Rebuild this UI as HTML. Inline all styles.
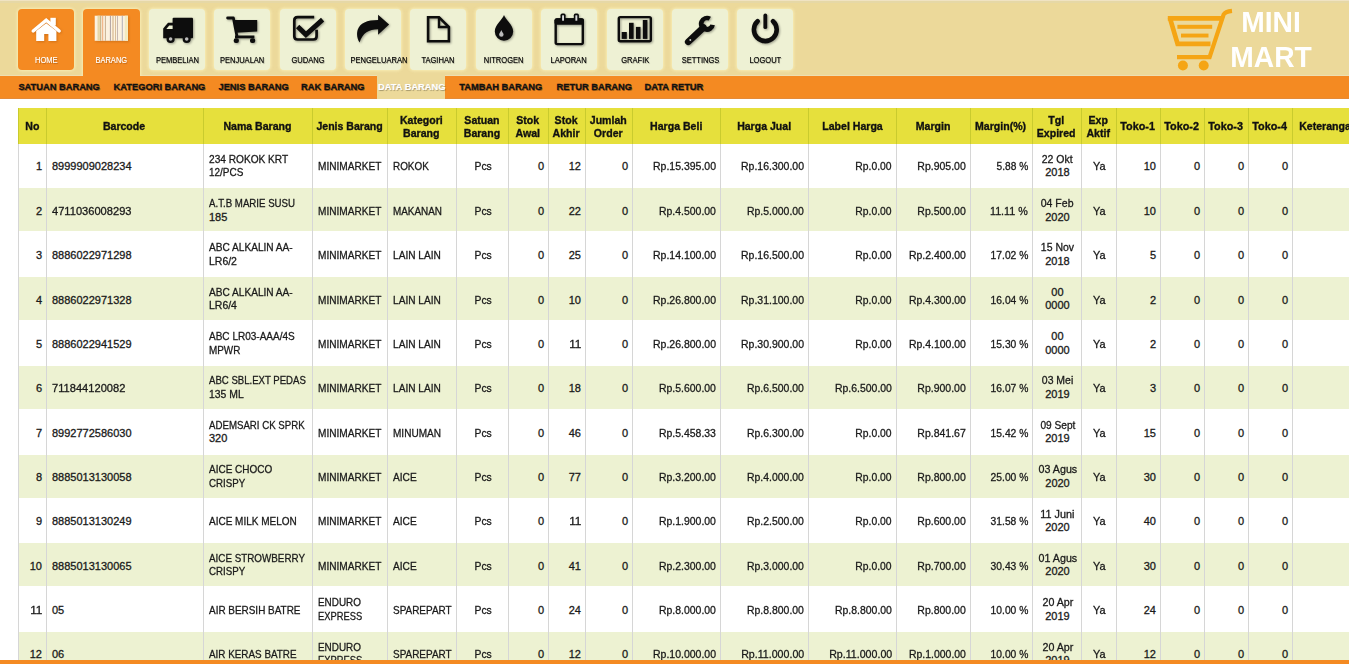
<!DOCTYPE html>
<html><head><meta charset="utf-8">
<style>
html,body{margin:0;padding:0;width:1349px;height:664px;overflow:hidden;background:#fff;font-family:"Liberation Sans",sans-serif;}
#hdr{position:absolute;left:0;top:0;width:1349px;height:76px;background:#ECD99A;}
#hdrtop{position:absolute;left:0;top:0;width:1349px;height:1px;background:#F0E3C2;}
#hdrtop2{position:absolute;left:0;top:1px;width:1349px;height:2px;background:#E6D8A6;}
.tile{position:absolute;top:9px;width:56px;height:61px;border-radius:4px;background:#EEF1D4;box-shadow:0 0 3px 1px rgba(250,240,185,0.85);}
.tile.on{background:#F48A22;}
.tile.sel{height:67px;width:57px;border-radius:4px 4px 0 0;}
.tile svg{position:absolute;left:0;top:0;}
.lbl{position:absolute;left:3px;width:50px;top:47px;text-align:center;font-size:8.2px;line-height:10px;color:#000;white-space:nowrap;-webkit-text-stroke:0.15px #000;text-shadow:0.7px 0.7px 0.7px rgba(0,0,0,0.3);}
.lbl span{display:inline-block;transform:scaleX(0.92);}
.on .lbl{color:#fff;-webkit-text-stroke:0.15px #fff;text-shadow:0.8px 0.8px 0.8px rgba(110,50,0,0.4);}
#sub{position:absolute;left:0;top:76px;width:1349px;height:23px;background:#F48A22;}
.si{position:absolute;top:80px;height:14px;line-height:14px;font-size:9.3px;font-weight:bold;color:#111;white-space:nowrap;-webkit-text-stroke:0.3px #111;text-shadow:0.8px 0.8px 0.6px rgba(0,0,0,0.3);}
#act{position:absolute;left:377px;top:76px;width:68px;height:23px;background:#ECD99A;}
.si.a{color:#fff;-webkit-text-stroke:0.2px #fff;text-shadow:0.8px 0.8px 0.8px rgba(0,0,0,0.3);}
#logo{position:absolute;left:1160px;top:5px;}
.lt{position:absolute;font-size:30px;font-weight:bold;color:#fff;width:120px;text-align:center;left:1211px;line-height:30px;transform:scaleX(0.94);}
#botbar{position:absolute;left:0;top:660px;width:1349px;height:4px;background:#F48A22;}

.th{position:absolute;top:108px;height:36px;background:#E6E03C;display:flex;align-items:center;justify-content:center;text-align:center;font-weight:bold;font-size:11px;line-height:13.4px;color:#111;-webkit-text-stroke:0.35px #111;box-sizing:border-box;}
.tr{position:absolute;left:18px;width:1346px;height:44.364px;background:#fff;}
.tr.even{background:#EDF2D2;height:43px;}
.td{position:absolute;height:44.364px;display:flex;white-space:nowrap;align-items:center;font-size:11px;line-height:13.5px;color:#1a1a1a;-webkit-text-stroke:0.3px #1a1a1a;box-sizing:border-box;padding:0 4px 0 6px;}
.td.r{justify-content:flex-end;text-align:right;}
.td.c{justify-content:center;text-align:center;}
.td.l{justify-content:flex-start;text-align:left;}
.in span{display:block;white-space:nowrap;}
.td .in.one{transform:translateY(0.7px)}
.th .in{transform:translateY(0.8px)}
.td.r .in{text-align:right}.td.c .in,.th .in{text-align:center}
.vl{position:absolute;top:144px;width:1px;height:516px;background:#D6D6D6;}
.hvl{position:absolute;top:108px;width:1px;height:36px;background:#C9CB2E;}
</style></head><body>
<div id="hdr"></div><div style="position:absolute;left:0;top:75px;width:377px;height:1px;background:#EDDFB2"></div><div style="position:absolute;left:445px;top:75px;width:904px;height:1px;background:#EDDFB2"></div><div id="hdrtop"></div><div id="hdrtop2"></div>
<div class="tile on" style="left:18px"><svg width="56" height="45" viewBox="0 0 56 45" style="filter:drop-shadow(1px 1px 1px rgba(150,70,0,0.35));"><polyline points="15.2,22 28.2,11.2 41.2,22" fill="none" stroke="#fff" stroke-width="3.4" stroke-linecap="round" stroke-linejoin="miter"/>
<path d="M18.2,22 L28.2,14.2 L38.4,22 V32 H30.4 V25 H26.2 V32 H18.2 Z" fill="#fff"/>
<rect x="32.4" y="8.8" width="5.4" height="7.6" fill="#fff"/></svg><div class="lbl"><span>HOME</span></div></div>
<div class="tile on sel" style="left:83px"><svg width="56" height="45" viewBox="0 0 56 45" style="filter:drop-shadow(1px 1px 1px rgba(150,70,0,0.35));"><rect x="11.7" y="6.7" width="33.3" height="25.1" fill="#FCF2E0"/>
<rect x="14.5" y="6.7" width="2.4" height="25.1" fill="#E6D6A8"/>
<rect x="17.2" y="6.7" width="1" height="25.1" fill="#BFA878"/>
<rect x="19.2" y="6.7" width="1" height="25.1" fill="#EFAA78"/>
<rect x="21.9" y="6.7" width="1" height="25.1" fill="#C8B090"/>
<rect x="26.9" y="6.7" width="1" height="25.1" fill="#B0A0A0"/>
<rect x="29.4" y="6.7" width="1.2" height="25.1" fill="#D8B890"/>
<rect x="32.1" y="6.7" width="0.8" height="25.1" fill="#D0B088"/>
<rect x="34.1" y="6.7" width="0.8" height="25.1" fill="#B8A8A8"/>
<rect x="38.8" y="6.7" width="1" height="25.1" fill="#B0B0B8"/>
<rect x="41.8" y="6.7" width="3" height="25.1" fill="#F3EBC0"/></svg><div class="lbl"><span>BARANG</span></div></div>
<div class="tile" style="left:149px"><svg width="56" height="45" viewBox="0 0 56 45" style="filter:drop-shadow(1px 1.5px 1px rgba(0,0,0,0.35));"><rect x="23.6" y="8.7" width="20.4" height="20.5" rx="1" fill="#0d0d0d"/>
<path d="M14.2,29.2 V19.5 L19,13.8 H24.5 V29.2 Z" fill="#0d0d0d"/>
<path d="M17.3,20 L20.2,16.6 H23.6 V20 Z" fill="#EEF1D4"/>
<circle cx="21.6" cy="30" r="4.1" fill="#0d0d0d"/><circle cx="37.7" cy="30" r="4.1" fill="#0d0d0d"/>
<circle cx="21.6" cy="30" r="1.8" fill="#bbb"/><circle cx="37.7" cy="30" r="1.8" fill="#bbb"/></svg><div class="lbl"><span>PEMBELIAN</span></div></div>
<div class="tile" style="left:214px"><svg width="56" height="45" viewBox="0 0 56 45" style="filter:drop-shadow(1px 1.5px 1px rgba(0,0,0,0.35));"><path d="M13.6,9 H19.4 L23,27.4" fill="none" stroke="#0d0d0d" stroke-width="2.8" stroke-linejoin="round" stroke-linecap="round"/>
<path d="M19.6,10.9 H43.2 V22.6 L21.9,23.8 Z" fill="#0d0d0d"/>
<rect x="21" y="26.5" width="19.4" height="2.8" fill="#0d0d0d"/>
<rect x="19.7" y="29.3" width="5.2" height="4.6" rx="2" fill="#0d0d0d"/><rect x="36" y="29.3" width="5.2" height="4.6" rx="2" fill="#0d0d0d"/></svg><div class="lbl"><span>PENJUALAN</span></div></div>
<div class="tile" style="left:280px"><svg width="56" height="45" viewBox="0 0 56 45" style="filter:drop-shadow(1px 1.5px 1px rgba(0,0,0,0.35));"><path d="M34.2,8.2 H17.6 Q14.3,8.2 14.3,11.5 V27.2 Q14.3,30.5 17.6,30.5 H33.3 Q36.6,30.5 36.6,27.2 V20.8" fill="none" stroke="#0d0d0d" stroke-width="2.7"/>
<path d="M17.6,17.6 L25.9,25.6 L42.6,10.6" fill="none" stroke="#0d0d0d" stroke-width="4.8" stroke-linejoin="miter"/></svg><div class="lbl"><span>GUDANG</span></div></div>
<div class="tile" style="left:345px"><svg width="56" height="45" viewBox="0 0 56 45" style="filter:drop-shadow(1px 1.5px 1px rgba(0,0,0,0.35));"><path d="M33.1,5.8 L44.1,15.6 L33.1,25.7 V20.3 C24,20.3 17.5,24 14.6,33.6 C11.8,29.5 11.6,24.5 12.6,21 C14.8,14 22,10.9 33.1,10.9 Z" fill="#0d0d0d"/></svg><div class="lbl"><span>PENGELUARAN</span></div></div>
<div class="tile" style="left:410px"><svg width="56" height="45" viewBox="0 0 56 45" style="filter:drop-shadow(1px 1.5px 1px rgba(0,0,0,0.35));"><path d="M18.1,8.3 H29 L38.9,18 V32.2 H18.1 Z" fill="none" stroke="#0d0d0d" stroke-width="2.6" stroke-linejoin="miter"/>
<path d="M29,8.3 V18 H38.9" fill="none" stroke="#0d0d0d" stroke-width="2.4"/></svg><div class="lbl"><span>TAGIHAN</span></div></div>
<div class="tile" style="left:476px"><svg width="56" height="45" viewBox="0 0 56 45" style="filter:drop-shadow(1px 1.5px 1px rgba(0,0,0,0.35));"><path d="M28,6 C29.5,10.5 37.2,16 37.2,22.5 A9.2,9.2 0 0 1 18.8,22.5 C18.8,16 26.5,10.5 28,6 Z" fill="#0d0d0d"/>
<path d="M25.3,21 C25.8,23 27.6,24.2 27.6,25.6 A2.2,2.2 0 0 1 23.1,25.6 C23.1,24.2 24.8,23 25.3,21 Z" fill="#bbb"/></svg><div class="lbl"><span>NITROGEN</span></div></div>
<div class="tile" style="left:541px"><svg width="56" height="45" viewBox="0 0 56 45" style="filter:drop-shadow(1px 1.5px 1px rgba(0,0,0,0.35));"><rect x="14.7" y="10.4" width="27.1" height="24.7" rx="1.5" fill="none" stroke="#0d0d0d" stroke-width="2.4"/>
<rect x="13.5" y="9.2" width="29.5" height="6.6" rx="2" fill="#0d0d0d"/>
<rect x="19.5" y="4.6" width="5.1" height="8.4" rx="1.6" fill="#0d0d0d"/><rect x="32.8" y="4.6" width="5.1" height="8.4" rx="1.6" fill="#0d0d0d"/>
<rect x="21.1" y="6.3" width="1.9" height="5.4" fill="#ddd"/><rect x="34.4" y="6.3" width="1.9" height="5.4" fill="#ddd"/></svg><div class="lbl"><span>LAPORAN</span></div></div>
<div class="tile" style="left:607px"><svg width="56" height="45" viewBox="0 0 56 45" style="filter:drop-shadow(1px 1.5px 1px rgba(0,0,0,0.35));"><rect x="11.8" y="8.1" width="32" height="24.2" rx="1.5" fill="none" stroke="#0d0d0d" stroke-width="2.4"/>
<rect x="14.7" y="23" width="5.1" height="6.9" fill="#0d0d0d"/><rect x="22" y="13.8" width="4.6" height="16.1" fill="#0d0d0d"/>
<rect x="28.9" y="17.9" width="4.6" height="12" fill="#0d0d0d"/><rect x="35.8" y="11" width="4.6" height="18.9" fill="#0d0d0d"/></svg><div class="lbl"><span>GRAFIK</span></div></div>
<div class="tile" style="left:672px"><svg width="56" height="45" viewBox="0 0 56 45" style="filter:drop-shadow(1px 1.5px 1px rgba(0,0,0,0.35));"><path d="M42.9,16.2 A8.1,8.1 0 1 1 38.95,7.8 L36.7,11.6 A3.4,3.4 0 1 0 38.3,15.4 Z" fill="#0d0d0d"/>
<path d="M31.5,18.5 L16.2,32.8" fill="none" stroke="#0d0d0d" stroke-width="6.6" stroke-linecap="round"/>
<circle cx="18.3" cy="31" r="0.95" fill="#ccc"/></svg><div class="lbl"><span>SETTINGS</span></div></div>
<div class="tile" style="left:737px"><svg width="56" height="45" viewBox="0 0 56 45" style="filter:drop-shadow(1px 1.5px 1px rgba(0,0,0,0.35));"><path d="M20.6,12.3 A11.4,11.4 0 1 0 36,12.3" fill="none" stroke="#0d0d0d" stroke-width="4.6" stroke-linecap="round"/>
<line x1="28.3" y1="6.4" x2="28.3" y2="18.2" stroke="#0d0d0d" stroke-width="3.8" stroke-linecap="round"/></svg><div class="lbl"><span>LOGOUT</span></div></div>
<div id="sub"></div>
<div id="act"></div><div style="position:absolute;left:0;top:98px;width:377px;height:1px;background:#E48A38"></div><div style="position:absolute;left:445px;top:98px;width:904px;height:1px;background:#E48A38"></div>
<div class="si" style="left:18.4px">SATUAN BARANG</div>
<div class="si" style="left:113.6px">KATEGORI BARANG</div>
<div class="si" style="left:218.5px">JENIS BARANG</div>
<div class="si" style="left:301px">RAK BARANG</div>
<div class="si a" style="left:378px">DATA BARANG</div>
<div class="si" style="left:459.3px">TAMBAH BARANG</div>
<div class="si" style="left:556.6px">RETUR BARANG</div>
<div class="si" style="left:644.6px">DATA RETUR</div>
<svg id="logo" width="80" height="70" viewBox="1160 5 80 70">
<path d="M1167.8,18.4 H1222 M1169.8,17.6 L1177.6,43.8 H1210.5" fill="none" stroke="#F5A514" stroke-width="4.7" stroke-linejoin="miter"/>
<path d="M1232,10.8 C1228,11.2 1225,12 1223.6,14.5 L1209.6,57.2 H1177" fill="none" stroke="#F5A514" stroke-width="4.2" stroke-linejoin="miter"/>
<rect x="1177.4" y="24.8" width="34.8" height="4" fill="#F5A514"/>
<rect x="1181" y="33.6" width="27.5" height="3.9" fill="#F5A514"/>
<circle cx="1182.9" cy="65.5" r="5" fill="#F5A514"/><circle cx="1203.7" cy="65.5" r="5" fill="#F5A514"/>
</svg>
<div class="lt" style="top:7px">MINI</div><div class="lt" style="top:42px">MART</div>
<div class="th" style="left:18px;width:28px"><div class="in"><span style="transform:scaleX(0.960);transform-origin:center">No</span></div></div>
<div class="th" style="left:46px;width:157px"><div class="in"><span style="transform:scaleX(0.960);transform-origin:center">Barcode</span></div></div>
<div class="th" style="left:203px;width:109px"><div class="in"><span style="transform:scaleX(0.960);transform-origin:center">Nama Barang</span></div></div>
<div class="th" style="left:312px;width:75px"><div class="in"><span style="transform:scaleX(0.960);transform-origin:center">Jenis Barang</span></div></div>
<div class="th" style="left:387px;width:69px"><div class="in"><span style="transform:scaleX(0.960);transform-origin:center">Kategori</span><span style="transform:scaleX(0.960);transform-origin:center">Barang</span></div></div>
<div class="th" style="left:456px;width:52px"><div class="in"><span style="transform:scaleX(0.960);transform-origin:center">Satuan</span><span style="transform:scaleX(0.960);transform-origin:center">Barang</span></div></div>
<div class="th" style="left:508px;width:40px"><div class="in"><span style="transform:scaleX(0.960);transform-origin:center">Stok</span><span style="transform:scaleX(0.967);transform-origin:center">Awal</span></div></div>
<div class="th" style="left:548px;width:37px"><div class="in"><span style="transform:scaleX(0.960);transform-origin:center">Stok</span><span style="transform:scaleX(0.960);transform-origin:center">Akhir</span></div></div>
<div class="th" style="left:585px;width:47px"><div class="in"><span style="transform:scaleX(0.960);transform-origin:center">Jumlah</span><span style="transform:scaleX(0.960);transform-origin:center">Order</span></div></div>
<div class="th" style="left:632px;width:88px"><div class="in"><span style="transform:scaleX(0.960);transform-origin:center">Harga Beli</span></div></div>
<div class="th" style="left:720px;width:88px"><div class="in"><span style="transform:scaleX(0.960);transform-origin:center">Harga Jual</span></div></div>
<div class="th" style="left:808px;width:88px"><div class="in"><span style="transform:scaleX(0.960);transform-origin:center">Label Harga</span></div></div>
<div class="th" style="left:896px;width:74px"><div class="in"><span style="transform:scaleX(0.960);transform-origin:center">Margin</span></div></div>
<div class="th" style="left:970px;width:62px"><div class="in"><span style="transform:scaleX(0.960);transform-origin:center">Margin(%)</span></div></div>
<div class="th" style="left:1032px;width:49px"><div class="in"><span style="transform:scaleX(0.960);transform-origin:center">Tgl</span><span style="transform:scaleX(0.960);transform-origin:center">Expired</span></div></div>
<div class="th" style="left:1081px;width:35px"><div class="in"><span style="transform:scaleX(0.960);transform-origin:center">Exp</span><span style="transform:scaleX(0.960);transform-origin:center">Aktif</span></div></div>
<div class="th" style="left:1116px;width:44px"><div class="in"><span style="transform:scaleX(0.982);transform-origin:center">Toko-1</span></div></div>
<div class="th" style="left:1160px;width:44px"><div class="in"><span style="transform:scaleX(0.982);transform-origin:center">Toko-2</span></div></div>
<div class="th" style="left:1204px;width:44px"><div class="in"><span style="transform:scaleX(0.982);transform-origin:center">Toko-3</span></div></div>
<div class="th" style="left:1248px;width:44px"><div class="in"><span style="transform:scaleX(0.982);transform-origin:center">Toko-4</span></div></div>
<div class="th" style="left:1292px;width:72px"><div class="in"><span style="transform:scaleX(0.960);transform-origin:center">Keterangan</span></div></div>
<div class="tr" style="top:144.000px"></div>
<div class="td r" style="left:18px;top:144.000px;width:28px"><div class="in one"><span style="transform:scaleX(1.000);transform-origin:right">1</span></div></div>
<div class="td l" style="left:46px;top:144.000px;width:157px"><div class="in one"><span style="transform:scaleX(1.000);transform-origin:left">8999909028234</span></div></div>
<div class="td l" style="left:203px;top:144.000px;width:109px"><div class="in"><span style="transform:scaleX(0.920);transform-origin:left">234 ROKOK KRT</span><span style="transform:scaleX(0.906);transform-origin:left">12/PCS</span></div></div>
<div class="td l" style="left:312px;top:144.000px;width:75px"><div class="in one"><span style="transform:scaleX(0.918);transform-origin:left">MINIMARKET</span></div></div>
<div class="td l" style="left:387px;top:144.000px;width:69px"><div class="in one"><span style="transform:scaleX(0.900);transform-origin:left">ROKOK</span></div></div>
<div class="td c" style="left:456px;top:144.000px;width:52px"><div class="in one"><span style="transform:scaleX(0.942);transform-origin:center">Pcs</span></div></div>
<div class="td r" style="left:508px;top:144.000px;width:40px"><div class="in one"><span style="transform:scaleX(1.000);transform-origin:right">0</span></div></div>
<div class="td r" style="left:548px;top:144.000px;width:37px"><div class="in one"><span style="transform:scaleX(1.000);transform-origin:right">12</span></div></div>
<div class="td r" style="left:585px;top:144.000px;width:47px"><div class="in one"><span style="transform:scaleX(1.000);transform-origin:right">0</span></div></div>
<div class="td r" style="left:632px;top:144.000px;width:88px"><div class="in one"><span style="transform:scaleX(0.955);transform-origin:right">Rp.15.395.00</span></div></div>
<div class="td r" style="left:720px;top:144.000px;width:88px"><div class="in one"><span style="transform:scaleX(0.955);transform-origin:right">Rp.16.300.00</span></div></div>
<div class="td r" style="left:808px;top:144.000px;width:88px"><div class="in one"><span style="transform:scaleX(0.940);transform-origin:right">Rp.0.00</span></div></div>
<div class="td r" style="left:896px;top:144.000px;width:74px"><div class="in one"><span style="transform:scaleX(0.954);transform-origin:right">Rp.905.00</span></div></div>
<div class="td r" style="left:970px;top:144.000px;width:62px"><div class="in one"><span style="transform:scaleX(0.924);transform-origin:right">5.88 %</span></div></div>
<div class="td c" style="left:1032px;top:144.000px;width:49px"><div class="in"><span style="transform:scaleX(0.952);transform-origin:center">22 Okt</span><span style="transform:scaleX(1.000);transform-origin:center">2018</span></div></div>
<div class="td c" style="left:1081px;top:144.000px;width:35px"><div class="in one"><span style="transform:scaleX(0.992);transform-origin:center">Ya</span></div></div>
<div class="td r" style="left:1116px;top:144.000px;width:44px"><div class="in one"><span style="transform:scaleX(1.000);transform-origin:right">10</span></div></div>
<div class="td r" style="left:1160px;top:144.000px;width:44px"><div class="in one"><span style="transform:scaleX(1.000);transform-origin:right">0</span></div></div>
<div class="td r" style="left:1204px;top:144.000px;width:44px"><div class="in one"><span style="transform:scaleX(1.000);transform-origin:right">0</span></div></div>
<div class="td r" style="left:1248px;top:144.000px;width:44px"><div class="in one"><span style="transform:scaleX(1.000);transform-origin:right">0</span></div></div>
<div class="td l" style="left:1292px;top:144.000px;width:72px"><div class="in one"><span style="transform:scaleX(1.000);transform-origin:left"></span></div></div>
<div class="tr even" style="top:188.364px"></div>
<div class="td r" style="left:18px;top:188.364px;width:28px"><div class="in one"><span style="transform:scaleX(1.000);transform-origin:right">2</span></div></div>
<div class="td l" style="left:46px;top:188.364px;width:157px"><div class="in one"><span style="transform:scaleX(1.010);transform-origin:left">4711036008293</span></div></div>
<div class="td l" style="left:203px;top:188.364px;width:109px"><div class="in"><span style="transform:scaleX(0.880);transform-origin:left">A.T.B MARIE SUSU</span><span style="transform:scaleX(1.000);transform-origin:left">185</span></div></div>
<div class="td l" style="left:312px;top:188.364px;width:75px"><div class="in one"><span style="transform:scaleX(0.918);transform-origin:left">MINIMARKET</span></div></div>
<div class="td l" style="left:387px;top:188.364px;width:69px"><div class="in one"><span style="transform:scaleX(0.900);transform-origin:left">MAKANAN</span></div></div>
<div class="td c" style="left:456px;top:188.364px;width:52px"><div class="in one"><span style="transform:scaleX(0.942);transform-origin:center">Pcs</span></div></div>
<div class="td r" style="left:508px;top:188.364px;width:40px"><div class="in one"><span style="transform:scaleX(1.000);transform-origin:right">0</span></div></div>
<div class="td r" style="left:548px;top:188.364px;width:37px"><div class="in one"><span style="transform:scaleX(1.000);transform-origin:right">22</span></div></div>
<div class="td r" style="left:585px;top:188.364px;width:47px"><div class="in one"><span style="transform:scaleX(1.000);transform-origin:right">0</span></div></div>
<div class="td r" style="left:632px;top:188.364px;width:88px"><div class="in one"><span style="transform:scaleX(0.950);transform-origin:right">Rp.4.500.00</span></div></div>
<div class="td r" style="left:720px;top:188.364px;width:88px"><div class="in one"><span style="transform:scaleX(0.950);transform-origin:right">Rp.5.000.00</span></div></div>
<div class="td r" style="left:808px;top:188.364px;width:88px"><div class="in one"><span style="transform:scaleX(0.940);transform-origin:right">Rp.0.00</span></div></div>
<div class="td r" style="left:896px;top:188.364px;width:74px"><div class="in one"><span style="transform:scaleX(0.954);transform-origin:right">Rp.500.00</span></div></div>
<div class="td r" style="left:970px;top:188.364px;width:62px"><div class="in one"><span style="transform:scaleX(0.975);transform-origin:right">11.11 %</span></div></div>
<div class="td c" style="left:1032px;top:188.364px;width:49px"><div class="in"><span style="transform:scaleX(0.956);transform-origin:center">04 Feb</span><span style="transform:scaleX(1.000);transform-origin:center">2020</span></div></div>
<div class="td c" style="left:1081px;top:188.364px;width:35px"><div class="in one"><span style="transform:scaleX(0.992);transform-origin:center">Ya</span></div></div>
<div class="td r" style="left:1116px;top:188.364px;width:44px"><div class="in one"><span style="transform:scaleX(1.000);transform-origin:right">10</span></div></div>
<div class="td r" style="left:1160px;top:188.364px;width:44px"><div class="in one"><span style="transform:scaleX(1.000);transform-origin:right">0</span></div></div>
<div class="td r" style="left:1204px;top:188.364px;width:44px"><div class="in one"><span style="transform:scaleX(1.000);transform-origin:right">0</span></div></div>
<div class="td r" style="left:1248px;top:188.364px;width:44px"><div class="in one"><span style="transform:scaleX(1.000);transform-origin:right">0</span></div></div>
<div class="td l" style="left:1292px;top:188.364px;width:72px"><div class="in one"><span style="transform:scaleX(1.000);transform-origin:left"></span></div></div>
<div class="tr" style="top:232.728px"></div>
<div class="td r" style="left:18px;top:232.728px;width:28px"><div class="in one"><span style="transform:scaleX(1.000);transform-origin:right">3</span></div></div>
<div class="td l" style="left:46px;top:232.728px;width:157px"><div class="in one"><span style="transform:scaleX(1.000);transform-origin:left">8886022971298</span></div></div>
<div class="td l" style="left:203px;top:232.728px;width:109px"><div class="in"><span style="transform:scaleX(0.919);transform-origin:left">ABC ALKALIN AA-</span><span style="transform:scaleX(0.952);transform-origin:left">LR6/2</span></div></div>
<div class="td l" style="left:312px;top:232.728px;width:75px"><div class="in one"><span style="transform:scaleX(0.918);transform-origin:left">MINIMARKET</span></div></div>
<div class="td l" style="left:387px;top:232.728px;width:69px"><div class="in one"><span style="transform:scaleX(0.921);transform-origin:left">LAIN LAIN</span></div></div>
<div class="td c" style="left:456px;top:232.728px;width:52px"><div class="in one"><span style="transform:scaleX(0.942);transform-origin:center">Pcs</span></div></div>
<div class="td r" style="left:508px;top:232.728px;width:40px"><div class="in one"><span style="transform:scaleX(1.000);transform-origin:right">0</span></div></div>
<div class="td r" style="left:548px;top:232.728px;width:37px"><div class="in one"><span style="transform:scaleX(1.000);transform-origin:right">25</span></div></div>
<div class="td r" style="left:585px;top:232.728px;width:47px"><div class="in one"><span style="transform:scaleX(1.000);transform-origin:right">0</span></div></div>
<div class="td r" style="left:632px;top:232.728px;width:88px"><div class="in one"><span style="transform:scaleX(0.955);transform-origin:right">Rp.14.100.00</span></div></div>
<div class="td r" style="left:720px;top:232.728px;width:88px"><div class="in one"><span style="transform:scaleX(0.955);transform-origin:right">Rp.16.500.00</span></div></div>
<div class="td r" style="left:808px;top:232.728px;width:88px"><div class="in one"><span style="transform:scaleX(0.940);transform-origin:right">Rp.0.00</span></div></div>
<div class="td r" style="left:896px;top:232.728px;width:74px"><div class="in one"><span style="transform:scaleX(0.950);transform-origin:right">Rp.2.400.00</span></div></div>
<div class="td r" style="left:970px;top:232.728px;width:62px"><div class="in one"><span style="transform:scaleX(0.936);transform-origin:right">17.02 %</span></div></div>
<div class="td c" style="left:1032px;top:232.728px;width:49px"><div class="in"><span style="transform:scaleX(0.954);transform-origin:center">15 Nov</span><span style="transform:scaleX(1.000);transform-origin:center">2018</span></div></div>
<div class="td c" style="left:1081px;top:232.728px;width:35px"><div class="in one"><span style="transform:scaleX(0.992);transform-origin:center">Ya</span></div></div>
<div class="td r" style="left:1116px;top:232.728px;width:44px"><div class="in one"><span style="transform:scaleX(1.000);transform-origin:right">5</span></div></div>
<div class="td r" style="left:1160px;top:232.728px;width:44px"><div class="in one"><span style="transform:scaleX(1.000);transform-origin:right">0</span></div></div>
<div class="td r" style="left:1204px;top:232.728px;width:44px"><div class="in one"><span style="transform:scaleX(1.000);transform-origin:right">0</span></div></div>
<div class="td r" style="left:1248px;top:232.728px;width:44px"><div class="in one"><span style="transform:scaleX(1.000);transform-origin:right">0</span></div></div>
<div class="td l" style="left:1292px;top:232.728px;width:72px"><div class="in one"><span style="transform:scaleX(1.000);transform-origin:left"></span></div></div>
<div class="tr even" style="top:277.092px"></div>
<div class="td r" style="left:18px;top:277.092px;width:28px"><div class="in one"><span style="transform:scaleX(1.000);transform-origin:right">4</span></div></div>
<div class="td l" style="left:46px;top:277.092px;width:157px"><div class="in one"><span style="transform:scaleX(1.000);transform-origin:left">8886022971328</span></div></div>
<div class="td l" style="left:203px;top:277.092px;width:109px"><div class="in"><span style="transform:scaleX(0.919);transform-origin:left">ABC ALKALIN AA-</span><span style="transform:scaleX(0.952);transform-origin:left">LR6/4</span></div></div>
<div class="td l" style="left:312px;top:277.092px;width:75px"><div class="in one"><span style="transform:scaleX(0.918);transform-origin:left">MINIMARKET</span></div></div>
<div class="td l" style="left:387px;top:277.092px;width:69px"><div class="in one"><span style="transform:scaleX(0.921);transform-origin:left">LAIN LAIN</span></div></div>
<div class="td c" style="left:456px;top:277.092px;width:52px"><div class="in one"><span style="transform:scaleX(0.942);transform-origin:center">Pcs</span></div></div>
<div class="td r" style="left:508px;top:277.092px;width:40px"><div class="in one"><span style="transform:scaleX(1.000);transform-origin:right">0</span></div></div>
<div class="td r" style="left:548px;top:277.092px;width:37px"><div class="in one"><span style="transform:scaleX(1.000);transform-origin:right">10</span></div></div>
<div class="td r" style="left:585px;top:277.092px;width:47px"><div class="in one"><span style="transform:scaleX(1.000);transform-origin:right">0</span></div></div>
<div class="td r" style="left:632px;top:277.092px;width:88px"><div class="in one"><span style="transform:scaleX(0.955);transform-origin:right">Rp.26.800.00</span></div></div>
<div class="td r" style="left:720px;top:277.092px;width:88px"><div class="in one"><span style="transform:scaleX(0.955);transform-origin:right">Rp.31.100.00</span></div></div>
<div class="td r" style="left:808px;top:277.092px;width:88px"><div class="in one"><span style="transform:scaleX(0.940);transform-origin:right">Rp.0.00</span></div></div>
<div class="td r" style="left:896px;top:277.092px;width:74px"><div class="in one"><span style="transform:scaleX(0.950);transform-origin:right">Rp.4.300.00</span></div></div>
<div class="td r" style="left:970px;top:277.092px;width:62px"><div class="in one"><span style="transform:scaleX(0.936);transform-origin:right">16.04 %</span></div></div>
<div class="td c" style="left:1032px;top:277.092px;width:49px"><div class="in"><span style="transform:scaleX(1.000);transform-origin:center">00</span><span style="transform:scaleX(1.000);transform-origin:center">0000</span></div></div>
<div class="td c" style="left:1081px;top:277.092px;width:35px"><div class="in one"><span style="transform:scaleX(0.992);transform-origin:center">Ya</span></div></div>
<div class="td r" style="left:1116px;top:277.092px;width:44px"><div class="in one"><span style="transform:scaleX(1.000);transform-origin:right">2</span></div></div>
<div class="td r" style="left:1160px;top:277.092px;width:44px"><div class="in one"><span style="transform:scaleX(1.000);transform-origin:right">0</span></div></div>
<div class="td r" style="left:1204px;top:277.092px;width:44px"><div class="in one"><span style="transform:scaleX(1.000);transform-origin:right">0</span></div></div>
<div class="td r" style="left:1248px;top:277.092px;width:44px"><div class="in one"><span style="transform:scaleX(1.000);transform-origin:right">0</span></div></div>
<div class="td l" style="left:1292px;top:277.092px;width:72px"><div class="in one"><span style="transform:scaleX(1.000);transform-origin:left"></span></div></div>
<div class="tr" style="top:321.456px"></div>
<div class="td r" style="left:18px;top:321.456px;width:28px"><div class="in one"><span style="transform:scaleX(1.000);transform-origin:right">5</span></div></div>
<div class="td l" style="left:46px;top:321.456px;width:157px"><div class="in one"><span style="transform:scaleX(1.000);transform-origin:left">8886022941529</span></div></div>
<div class="td l" style="left:203px;top:321.456px;width:109px"><div class="in"><span style="transform:scaleX(0.911);transform-origin:left">ABC LR03-AAA/4S</span><span style="transform:scaleX(0.900);transform-origin:left">MPWR</span></div></div>
<div class="td l" style="left:312px;top:321.456px;width:75px"><div class="in one"><span style="transform:scaleX(0.918);transform-origin:left">MINIMARKET</span></div></div>
<div class="td l" style="left:387px;top:321.456px;width:69px"><div class="in one"><span style="transform:scaleX(0.921);transform-origin:left">LAIN LAIN</span></div></div>
<div class="td c" style="left:456px;top:321.456px;width:52px"><div class="in one"><span style="transform:scaleX(0.942);transform-origin:center">Pcs</span></div></div>
<div class="td r" style="left:508px;top:321.456px;width:40px"><div class="in one"><span style="transform:scaleX(1.000);transform-origin:right">0</span></div></div>
<div class="td r" style="left:548px;top:321.456px;width:37px"><div class="in one"><span style="transform:scaleX(1.071);transform-origin:right">11</span></div></div>
<div class="td r" style="left:585px;top:321.456px;width:47px"><div class="in one"><span style="transform:scaleX(1.000);transform-origin:right">0</span></div></div>
<div class="td r" style="left:632px;top:321.456px;width:88px"><div class="in one"><span style="transform:scaleX(0.955);transform-origin:right">Rp.26.800.00</span></div></div>
<div class="td r" style="left:720px;top:321.456px;width:88px"><div class="in one"><span style="transform:scaleX(0.955);transform-origin:right">Rp.30.900.00</span></div></div>
<div class="td r" style="left:808px;top:321.456px;width:88px"><div class="in one"><span style="transform:scaleX(0.940);transform-origin:right">Rp.0.00</span></div></div>
<div class="td r" style="left:896px;top:321.456px;width:74px"><div class="in one"><span style="transform:scaleX(0.950);transform-origin:right">Rp.4.100.00</span></div></div>
<div class="td r" style="left:970px;top:321.456px;width:62px"><div class="in one"><span style="transform:scaleX(0.936);transform-origin:right">15.30 %</span></div></div>
<div class="td c" style="left:1032px;top:321.456px;width:49px"><div class="in"><span style="transform:scaleX(1.000);transform-origin:center">00</span><span style="transform:scaleX(1.000);transform-origin:center">0000</span></div></div>
<div class="td c" style="left:1081px;top:321.456px;width:35px"><div class="in one"><span style="transform:scaleX(0.992);transform-origin:center">Ya</span></div></div>
<div class="td r" style="left:1116px;top:321.456px;width:44px"><div class="in one"><span style="transform:scaleX(1.000);transform-origin:right">2</span></div></div>
<div class="td r" style="left:1160px;top:321.456px;width:44px"><div class="in one"><span style="transform:scaleX(1.000);transform-origin:right">0</span></div></div>
<div class="td r" style="left:1204px;top:321.456px;width:44px"><div class="in one"><span style="transform:scaleX(1.000);transform-origin:right">0</span></div></div>
<div class="td r" style="left:1248px;top:321.456px;width:44px"><div class="in one"><span style="transform:scaleX(1.000);transform-origin:right">0</span></div></div>
<div class="td l" style="left:1292px;top:321.456px;width:72px"><div class="in one"><span style="transform:scaleX(1.000);transform-origin:left"></span></div></div>
<div class="tr even" style="top:365.820px"></div>
<div class="td r" style="left:18px;top:365.820px;width:28px"><div class="in one"><span style="transform:scaleX(1.000);transform-origin:right">6</span></div></div>
<div class="td l" style="left:46px;top:365.820px;width:157px"><div class="in one"><span style="transform:scaleX(1.011);transform-origin:left">711844120082</span></div></div>
<div class="td l" style="left:203px;top:365.820px;width:109px"><div class="in"><span style="transform:scaleX(0.872);transform-origin:left">ABC SBL.EXT PEDAS</span><span style="transform:scaleX(0.946);transform-origin:left">135 ML</span></div></div>
<div class="td l" style="left:312px;top:365.820px;width:75px"><div class="in one"><span style="transform:scaleX(0.918);transform-origin:left">MINIMARKET</span></div></div>
<div class="td l" style="left:387px;top:365.820px;width:69px"><div class="in one"><span style="transform:scaleX(0.921);transform-origin:left">LAIN LAIN</span></div></div>
<div class="td c" style="left:456px;top:365.820px;width:52px"><div class="in one"><span style="transform:scaleX(0.942);transform-origin:center">Pcs</span></div></div>
<div class="td r" style="left:508px;top:365.820px;width:40px"><div class="in one"><span style="transform:scaleX(1.000);transform-origin:right">0</span></div></div>
<div class="td r" style="left:548px;top:365.820px;width:37px"><div class="in one"><span style="transform:scaleX(1.000);transform-origin:right">18</span></div></div>
<div class="td r" style="left:585px;top:365.820px;width:47px"><div class="in one"><span style="transform:scaleX(1.000);transform-origin:right">0</span></div></div>
<div class="td r" style="left:632px;top:365.820px;width:88px"><div class="in one"><span style="transform:scaleX(0.950);transform-origin:right">Rp.5.600.00</span></div></div>
<div class="td r" style="left:720px;top:365.820px;width:88px"><div class="in one"><span style="transform:scaleX(0.950);transform-origin:right">Rp.6.500.00</span></div></div>
<div class="td r" style="left:808px;top:365.820px;width:88px"><div class="in one"><span style="transform:scaleX(0.950);transform-origin:right">Rp.6.500.00</span></div></div>
<div class="td r" style="left:896px;top:365.820px;width:74px"><div class="in one"><span style="transform:scaleX(0.954);transform-origin:right">Rp.900.00</span></div></div>
<div class="td r" style="left:970px;top:365.820px;width:62px"><div class="in one"><span style="transform:scaleX(0.936);transform-origin:right">16.07 %</span></div></div>
<div class="td c" style="left:1032px;top:365.820px;width:49px"><div class="in"><span style="transform:scaleX(0.951);transform-origin:center">03 Mei</span><span style="transform:scaleX(1.000);transform-origin:center">2019</span></div></div>
<div class="td c" style="left:1081px;top:365.820px;width:35px"><div class="in one"><span style="transform:scaleX(0.992);transform-origin:center">Ya</span></div></div>
<div class="td r" style="left:1116px;top:365.820px;width:44px"><div class="in one"><span style="transform:scaleX(1.000);transform-origin:right">3</span></div></div>
<div class="td r" style="left:1160px;top:365.820px;width:44px"><div class="in one"><span style="transform:scaleX(1.000);transform-origin:right">0</span></div></div>
<div class="td r" style="left:1204px;top:365.820px;width:44px"><div class="in one"><span style="transform:scaleX(1.000);transform-origin:right">0</span></div></div>
<div class="td r" style="left:1248px;top:365.820px;width:44px"><div class="in one"><span style="transform:scaleX(1.000);transform-origin:right">0</span></div></div>
<div class="td l" style="left:1292px;top:365.820px;width:72px"><div class="in one"><span style="transform:scaleX(1.000);transform-origin:left"></span></div></div>
<div class="tr" style="top:410.184px"></div>
<div class="td r" style="left:18px;top:410.184px;width:28px"><div class="in one"><span style="transform:scaleX(1.000);transform-origin:right">7</span></div></div>
<div class="td l" style="left:46px;top:410.184px;width:157px"><div class="in one"><span style="transform:scaleX(1.000);transform-origin:left">8992772586030</span></div></div>
<div class="td l" style="left:203px;top:410.184px;width:109px"><div class="in"><span style="transform:scaleX(0.879);transform-origin:left">ADEMSARI CK SPRK</span><span style="transform:scaleX(1.000);transform-origin:left">320</span></div></div>
<div class="td l" style="left:312px;top:410.184px;width:75px"><div class="in one"><span style="transform:scaleX(0.918);transform-origin:left">MINIMARKET</span></div></div>
<div class="td l" style="left:387px;top:410.184px;width:69px"><div class="in one"><span style="transform:scaleX(0.912);transform-origin:left">MINUMAN</span></div></div>
<div class="td c" style="left:456px;top:410.184px;width:52px"><div class="in one"><span style="transform:scaleX(0.942);transform-origin:center">Pcs</span></div></div>
<div class="td r" style="left:508px;top:410.184px;width:40px"><div class="in one"><span style="transform:scaleX(1.000);transform-origin:right">0</span></div></div>
<div class="td r" style="left:548px;top:410.184px;width:37px"><div class="in one"><span style="transform:scaleX(1.000);transform-origin:right">46</span></div></div>
<div class="td r" style="left:585px;top:410.184px;width:47px"><div class="in one"><span style="transform:scaleX(1.000);transform-origin:right">0</span></div></div>
<div class="td r" style="left:632px;top:410.184px;width:88px"><div class="in one"><span style="transform:scaleX(0.950);transform-origin:right">Rp.5.458.33</span></div></div>
<div class="td r" style="left:720px;top:410.184px;width:88px"><div class="in one"><span style="transform:scaleX(0.950);transform-origin:right">Rp.6.300.00</span></div></div>
<div class="td r" style="left:808px;top:410.184px;width:88px"><div class="in one"><span style="transform:scaleX(0.940);transform-origin:right">Rp.0.00</span></div></div>
<div class="td r" style="left:896px;top:410.184px;width:74px"><div class="in one"><span style="transform:scaleX(0.954);transform-origin:right">Rp.841.67</span></div></div>
<div class="td r" style="left:970px;top:410.184px;width:62px"><div class="in one"><span style="transform:scaleX(0.936);transform-origin:right">15.42 %</span></div></div>
<div class="td c" style="left:1032px;top:410.184px;width:49px"><div class="in"><span style="transform:scaleX(0.922);transform-origin:center">09 Sept</span><span style="transform:scaleX(1.000);transform-origin:center">2019</span></div></div>
<div class="td c" style="left:1081px;top:410.184px;width:35px"><div class="in one"><span style="transform:scaleX(0.992);transform-origin:center">Ya</span></div></div>
<div class="td r" style="left:1116px;top:410.184px;width:44px"><div class="in one"><span style="transform:scaleX(1.000);transform-origin:right">15</span></div></div>
<div class="td r" style="left:1160px;top:410.184px;width:44px"><div class="in one"><span style="transform:scaleX(1.000);transform-origin:right">0</span></div></div>
<div class="td r" style="left:1204px;top:410.184px;width:44px"><div class="in one"><span style="transform:scaleX(1.000);transform-origin:right">0</span></div></div>
<div class="td r" style="left:1248px;top:410.184px;width:44px"><div class="in one"><span style="transform:scaleX(1.000);transform-origin:right">0</span></div></div>
<div class="td l" style="left:1292px;top:410.184px;width:72px"><div class="in one"><span style="transform:scaleX(1.000);transform-origin:left"></span></div></div>
<div class="tr even" style="top:454.548px"></div>
<div class="td r" style="left:18px;top:454.548px;width:28px"><div class="in one"><span style="transform:scaleX(1.000);transform-origin:right">8</span></div></div>
<div class="td l" style="left:46px;top:454.548px;width:157px"><div class="in one"><span style="transform:scaleX(1.000);transform-origin:left">8885013130058</span></div></div>
<div class="td l" style="left:203px;top:454.548px;width:109px"><div class="in"><span style="transform:scaleX(0.907);transform-origin:left">AICE CHOCO</span><span style="transform:scaleX(0.883);transform-origin:left">CRISPY</span></div></div>
<div class="td l" style="left:312px;top:454.548px;width:75px"><div class="in one"><span style="transform:scaleX(0.918);transform-origin:left">MINIMARKET</span></div></div>
<div class="td l" style="left:387px;top:454.548px;width:69px"><div class="in one"><span style="transform:scaleX(0.924);transform-origin:left">AICE</span></div></div>
<div class="td c" style="left:456px;top:454.548px;width:52px"><div class="in one"><span style="transform:scaleX(0.942);transform-origin:center">Pcs</span></div></div>
<div class="td r" style="left:508px;top:454.548px;width:40px"><div class="in one"><span style="transform:scaleX(1.000);transform-origin:right">0</span></div></div>
<div class="td r" style="left:548px;top:454.548px;width:37px"><div class="in one"><span style="transform:scaleX(1.000);transform-origin:right">77</span></div></div>
<div class="td r" style="left:585px;top:454.548px;width:47px"><div class="in one"><span style="transform:scaleX(1.000);transform-origin:right">0</span></div></div>
<div class="td r" style="left:632px;top:454.548px;width:88px"><div class="in one"><span style="transform:scaleX(0.950);transform-origin:right">Rp.3.200.00</span></div></div>
<div class="td r" style="left:720px;top:454.548px;width:88px"><div class="in one"><span style="transform:scaleX(0.950);transform-origin:right">Rp.4.000.00</span></div></div>
<div class="td r" style="left:808px;top:454.548px;width:88px"><div class="in one"><span style="transform:scaleX(0.940);transform-origin:right">Rp.0.00</span></div></div>
<div class="td r" style="left:896px;top:454.548px;width:74px"><div class="in one"><span style="transform:scaleX(0.954);transform-origin:right">Rp.800.00</span></div></div>
<div class="td r" style="left:970px;top:454.548px;width:62px"><div class="in one"><span style="transform:scaleX(0.936);transform-origin:right">25.00 %</span></div></div>
<div class="td c" style="left:1032px;top:454.548px;width:49px"><div class="in"><span style="transform:scaleX(0.972);transform-origin:center">03 Agus</span><span style="transform:scaleX(1.000);transform-origin:center">2020</span></div></div>
<div class="td c" style="left:1081px;top:454.548px;width:35px"><div class="in one"><span style="transform:scaleX(0.992);transform-origin:center">Ya</span></div></div>
<div class="td r" style="left:1116px;top:454.548px;width:44px"><div class="in one"><span style="transform:scaleX(1.000);transform-origin:right">30</span></div></div>
<div class="td r" style="left:1160px;top:454.548px;width:44px"><div class="in one"><span style="transform:scaleX(1.000);transform-origin:right">0</span></div></div>
<div class="td r" style="left:1204px;top:454.548px;width:44px"><div class="in one"><span style="transform:scaleX(1.000);transform-origin:right">0</span></div></div>
<div class="td r" style="left:1248px;top:454.548px;width:44px"><div class="in one"><span style="transform:scaleX(1.000);transform-origin:right">0</span></div></div>
<div class="td l" style="left:1292px;top:454.548px;width:72px"><div class="in one"><span style="transform:scaleX(1.000);transform-origin:left"></span></div></div>
<div class="tr" style="top:498.912px"></div>
<div class="td r" style="left:18px;top:498.912px;width:28px"><div class="in one"><span style="transform:scaleX(1.000);transform-origin:right">9</span></div></div>
<div class="td l" style="left:46px;top:498.912px;width:157px"><div class="in one"><span style="transform:scaleX(1.000);transform-origin:left">8885013130249</span></div></div>
<div class="td l" style="left:203px;top:498.912px;width:109px"><div class="in one"><span style="transform:scaleX(0.909);transform-origin:left">AICE MILK MELON</span></div></div>
<div class="td l" style="left:312px;top:498.912px;width:75px"><div class="in one"><span style="transform:scaleX(0.918);transform-origin:left">MINIMARKET</span></div></div>
<div class="td l" style="left:387px;top:498.912px;width:69px"><div class="in one"><span style="transform:scaleX(0.924);transform-origin:left">AICE</span></div></div>
<div class="td c" style="left:456px;top:498.912px;width:52px"><div class="in one"><span style="transform:scaleX(0.942);transform-origin:center">Pcs</span></div></div>
<div class="td r" style="left:508px;top:498.912px;width:40px"><div class="in one"><span style="transform:scaleX(1.000);transform-origin:right">0</span></div></div>
<div class="td r" style="left:548px;top:498.912px;width:37px"><div class="in one"><span style="transform:scaleX(1.071);transform-origin:right">11</span></div></div>
<div class="td r" style="left:585px;top:498.912px;width:47px"><div class="in one"><span style="transform:scaleX(1.000);transform-origin:right">0</span></div></div>
<div class="td r" style="left:632px;top:498.912px;width:88px"><div class="in one"><span style="transform:scaleX(0.950);transform-origin:right">Rp.1.900.00</span></div></div>
<div class="td r" style="left:720px;top:498.912px;width:88px"><div class="in one"><span style="transform:scaleX(0.950);transform-origin:right">Rp.2.500.00</span></div></div>
<div class="td r" style="left:808px;top:498.912px;width:88px"><div class="in one"><span style="transform:scaleX(0.940);transform-origin:right">Rp.0.00</span></div></div>
<div class="td r" style="left:896px;top:498.912px;width:74px"><div class="in one"><span style="transform:scaleX(0.954);transform-origin:right">Rp.600.00</span></div></div>
<div class="td r" style="left:970px;top:498.912px;width:62px"><div class="in one"><span style="transform:scaleX(0.936);transform-origin:right">31.58 %</span></div></div>
<div class="td c" style="left:1032px;top:498.912px;width:49px"><div class="in"><span style="transform:scaleX(0.982);transform-origin:center">11 Juni</span><span style="transform:scaleX(1.000);transform-origin:center">2020</span></div></div>
<div class="td c" style="left:1081px;top:498.912px;width:35px"><div class="in one"><span style="transform:scaleX(0.992);transform-origin:center">Ya</span></div></div>
<div class="td r" style="left:1116px;top:498.912px;width:44px"><div class="in one"><span style="transform:scaleX(1.000);transform-origin:right">40</span></div></div>
<div class="td r" style="left:1160px;top:498.912px;width:44px"><div class="in one"><span style="transform:scaleX(1.000);transform-origin:right">0</span></div></div>
<div class="td r" style="left:1204px;top:498.912px;width:44px"><div class="in one"><span style="transform:scaleX(1.000);transform-origin:right">0</span></div></div>
<div class="td r" style="left:1248px;top:498.912px;width:44px"><div class="in one"><span style="transform:scaleX(1.000);transform-origin:right">0</span></div></div>
<div class="td l" style="left:1292px;top:498.912px;width:72px"><div class="in one"><span style="transform:scaleX(1.000);transform-origin:left"></span></div></div>
<div class="tr even" style="top:543.276px"></div>
<div class="td r" style="left:18px;top:543.276px;width:28px"><div class="in one"><span style="transform:scaleX(1.000);transform-origin:right">10</span></div></div>
<div class="td l" style="left:46px;top:543.276px;width:157px"><div class="in one"><span style="transform:scaleX(1.000);transform-origin:left">8885013130065</span></div></div>
<div class="td l" style="left:203px;top:543.276px;width:109px"><div class="in"><span style="transform:scaleX(0.894);transform-origin:left">AICE STROWBERRY</span><span style="transform:scaleX(0.883);transform-origin:left">CRISPY</span></div></div>
<div class="td l" style="left:312px;top:543.276px;width:75px"><div class="in one"><span style="transform:scaleX(0.918);transform-origin:left">MINIMARKET</span></div></div>
<div class="td l" style="left:387px;top:543.276px;width:69px"><div class="in one"><span style="transform:scaleX(0.924);transform-origin:left">AICE</span></div></div>
<div class="td c" style="left:456px;top:543.276px;width:52px"><div class="in one"><span style="transform:scaleX(0.942);transform-origin:center">Pcs</span></div></div>
<div class="td r" style="left:508px;top:543.276px;width:40px"><div class="in one"><span style="transform:scaleX(1.000);transform-origin:right">0</span></div></div>
<div class="td r" style="left:548px;top:543.276px;width:37px"><div class="in one"><span style="transform:scaleX(1.000);transform-origin:right">41</span></div></div>
<div class="td r" style="left:585px;top:543.276px;width:47px"><div class="in one"><span style="transform:scaleX(1.000);transform-origin:right">0</span></div></div>
<div class="td r" style="left:632px;top:543.276px;width:88px"><div class="in one"><span style="transform:scaleX(0.950);transform-origin:right">Rp.2.300.00</span></div></div>
<div class="td r" style="left:720px;top:543.276px;width:88px"><div class="in one"><span style="transform:scaleX(0.950);transform-origin:right">Rp.3.000.00</span></div></div>
<div class="td r" style="left:808px;top:543.276px;width:88px"><div class="in one"><span style="transform:scaleX(0.940);transform-origin:right">Rp.0.00</span></div></div>
<div class="td r" style="left:896px;top:543.276px;width:74px"><div class="in one"><span style="transform:scaleX(0.954);transform-origin:right">Rp.700.00</span></div></div>
<div class="td r" style="left:970px;top:543.276px;width:62px"><div class="in one"><span style="transform:scaleX(0.936);transform-origin:right">30.43 %</span></div></div>
<div class="td c" style="left:1032px;top:543.276px;width:49px"><div class="in"><span style="transform:scaleX(0.972);transform-origin:center">01 Agus</span><span style="transform:scaleX(1.000);transform-origin:center">2020</span></div></div>
<div class="td c" style="left:1081px;top:543.276px;width:35px"><div class="in one"><span style="transform:scaleX(0.992);transform-origin:center">Ya</span></div></div>
<div class="td r" style="left:1116px;top:543.276px;width:44px"><div class="in one"><span style="transform:scaleX(1.000);transform-origin:right">30</span></div></div>
<div class="td r" style="left:1160px;top:543.276px;width:44px"><div class="in one"><span style="transform:scaleX(1.000);transform-origin:right">0</span></div></div>
<div class="td r" style="left:1204px;top:543.276px;width:44px"><div class="in one"><span style="transform:scaleX(1.000);transform-origin:right">0</span></div></div>
<div class="td r" style="left:1248px;top:543.276px;width:44px"><div class="in one"><span style="transform:scaleX(1.000);transform-origin:right">0</span></div></div>
<div class="td l" style="left:1292px;top:543.276px;width:72px"><div class="in one"><span style="transform:scaleX(1.000);transform-origin:left"></span></div></div>
<div class="tr" style="top:587.640px"></div>
<div class="td r" style="left:18px;top:587.640px;width:28px"><div class="in one"><span style="transform:scaleX(1.071);transform-origin:right">11</span></div></div>
<div class="td l" style="left:46px;top:587.640px;width:157px"><div class="in one"><span style="transform:scaleX(1.000);transform-origin:left">05</span></div></div>
<div class="td l" style="left:203px;top:587.640px;width:109px"><div class="in one"><span style="transform:scaleX(0.903);transform-origin:left">AIR BERSIH BATRE</span></div></div>
<div class="td l" style="left:312px;top:587.640px;width:75px"><div class="in"><span style="transform:scaleX(0.900);transform-origin:left">ENDURO</span><span style="transform:scaleX(0.849);transform-origin:left">EXPRESS</span></div></div>
<div class="td l" style="left:387px;top:587.640px;width:69px"><div class="in one"><span style="transform:scaleX(0.905);transform-origin:left">SPAREPART</span></div></div>
<div class="td c" style="left:456px;top:587.640px;width:52px"><div class="in one"><span style="transform:scaleX(0.942);transform-origin:center">Pcs</span></div></div>
<div class="td r" style="left:508px;top:587.640px;width:40px"><div class="in one"><span style="transform:scaleX(1.000);transform-origin:right">0</span></div></div>
<div class="td r" style="left:548px;top:587.640px;width:37px"><div class="in one"><span style="transform:scaleX(1.000);transform-origin:right">24</span></div></div>
<div class="td r" style="left:585px;top:587.640px;width:47px"><div class="in one"><span style="transform:scaleX(1.000);transform-origin:right">0</span></div></div>
<div class="td r" style="left:632px;top:587.640px;width:88px"><div class="in one"><span style="transform:scaleX(0.950);transform-origin:right">Rp.8.000.00</span></div></div>
<div class="td r" style="left:720px;top:587.640px;width:88px"><div class="in one"><span style="transform:scaleX(0.950);transform-origin:right">Rp.8.800.00</span></div></div>
<div class="td r" style="left:808px;top:587.640px;width:88px"><div class="in one"><span style="transform:scaleX(0.950);transform-origin:right">Rp.8.800.00</span></div></div>
<div class="td r" style="left:896px;top:587.640px;width:74px"><div class="in one"><span style="transform:scaleX(0.954);transform-origin:right">Rp.800.00</span></div></div>
<div class="td r" style="left:970px;top:587.640px;width:62px"><div class="in one"><span style="transform:scaleX(0.936);transform-origin:right">10.00 %</span></div></div>
<div class="td c" style="left:1032px;top:587.640px;width:49px"><div class="in"><span style="transform:scaleX(0.972);transform-origin:center">20 Apr</span><span style="transform:scaleX(1.000);transform-origin:center">2019</span></div></div>
<div class="td c" style="left:1081px;top:587.640px;width:35px"><div class="in one"><span style="transform:scaleX(0.992);transform-origin:center">Ya</span></div></div>
<div class="td r" style="left:1116px;top:587.640px;width:44px"><div class="in one"><span style="transform:scaleX(1.000);transform-origin:right">24</span></div></div>
<div class="td r" style="left:1160px;top:587.640px;width:44px"><div class="in one"><span style="transform:scaleX(1.000);transform-origin:right">0</span></div></div>
<div class="td r" style="left:1204px;top:587.640px;width:44px"><div class="in one"><span style="transform:scaleX(1.000);transform-origin:right">0</span></div></div>
<div class="td r" style="left:1248px;top:587.640px;width:44px"><div class="in one"><span style="transform:scaleX(1.000);transform-origin:right">0</span></div></div>
<div class="td l" style="left:1292px;top:587.640px;width:72px"><div class="in one"><span style="transform:scaleX(1.000);transform-origin:left"></span></div></div>
<div class="tr even" style="top:632.004px"></div>
<div class="td r" style="left:18px;top:632.004px;width:28px"><div class="in one"><span style="transform:scaleX(1.000);transform-origin:right">12</span></div></div>
<div class="td l" style="left:46px;top:632.004px;width:157px"><div class="in one"><span style="transform:scaleX(1.000);transform-origin:left">06</span></div></div>
<div class="td l" style="left:203px;top:632.004px;width:109px"><div class="in one"><span style="transform:scaleX(0.897);transform-origin:left">AIR KERAS BATRE</span></div></div>
<div class="td l" style="left:312px;top:632.004px;width:75px"><div class="in"><span style="transform:scaleX(0.900);transform-origin:left">ENDURO</span><span style="transform:scaleX(0.849);transform-origin:left">EXPRESS</span></div></div>
<div class="td l" style="left:387px;top:632.004px;width:69px"><div class="in one"><span style="transform:scaleX(0.905);transform-origin:left">SPAREPART</span></div></div>
<div class="td c" style="left:456px;top:632.004px;width:52px"><div class="in one"><span style="transform:scaleX(0.942);transform-origin:center">Pcs</span></div></div>
<div class="td r" style="left:508px;top:632.004px;width:40px"><div class="in one"><span style="transform:scaleX(1.000);transform-origin:right">0</span></div></div>
<div class="td r" style="left:548px;top:632.004px;width:37px"><div class="in one"><span style="transform:scaleX(1.000);transform-origin:right">12</span></div></div>
<div class="td r" style="left:585px;top:632.004px;width:47px"><div class="in one"><span style="transform:scaleX(1.000);transform-origin:right">0</span></div></div>
<div class="td r" style="left:632px;top:632.004px;width:88px"><div class="in one"><span style="transform:scaleX(0.955);transform-origin:right">Rp.10.000.00</span></div></div>
<div class="td r" style="left:720px;top:632.004px;width:88px"><div class="in one"><span style="transform:scaleX(0.967);transform-origin:right">Rp.11.000.00</span></div></div>
<div class="td r" style="left:808px;top:632.004px;width:88px"><div class="in one"><span style="transform:scaleX(0.967);transform-origin:right">Rp.11.000.00</span></div></div>
<div class="td r" style="left:896px;top:632.004px;width:74px"><div class="in one"><span style="transform:scaleX(0.950);transform-origin:right">Rp.1.000.00</span></div></div>
<div class="td r" style="left:970px;top:632.004px;width:62px"><div class="in one"><span style="transform:scaleX(0.936);transform-origin:right">10.00 %</span></div></div>
<div class="td c" style="left:1032px;top:632.004px;width:49px"><div class="in"><span style="transform:scaleX(0.972);transform-origin:center">20 Apr</span><span style="transform:scaleX(1.000);transform-origin:center">2019</span></div></div>
<div class="td c" style="left:1081px;top:632.004px;width:35px"><div class="in one"><span style="transform:scaleX(0.992);transform-origin:center">Ya</span></div></div>
<div class="td r" style="left:1116px;top:632.004px;width:44px"><div class="in one"><span style="transform:scaleX(1.000);transform-origin:right">12</span></div></div>
<div class="td r" style="left:1160px;top:632.004px;width:44px"><div class="in one"><span style="transform:scaleX(1.000);transform-origin:right">0</span></div></div>
<div class="td r" style="left:1204px;top:632.004px;width:44px"><div class="in one"><span style="transform:scaleX(1.000);transform-origin:right">0</span></div></div>
<div class="td r" style="left:1248px;top:632.004px;width:44px"><div class="in one"><span style="transform:scaleX(1.000);transform-origin:right">0</span></div></div>
<div class="td l" style="left:1292px;top:632.004px;width:72px"><div class="in one"><span style="transform:scaleX(1.000);transform-origin:left"></span></div></div>
<div class="vl" style="left:18px"></div>
<div class="hvl" style="left:18px"></div>
<div class="vl" style="left:46px"></div>
<div class="hvl" style="left:46px"></div>
<div class="vl" style="left:203px"></div>
<div class="hvl" style="left:203px"></div>
<div class="vl" style="left:312px"></div>
<div class="hvl" style="left:312px"></div>
<div class="vl" style="left:387px"></div>
<div class="hvl" style="left:387px"></div>
<div class="vl" style="left:456px"></div>
<div class="hvl" style="left:456px"></div>
<div class="vl" style="left:508px"></div>
<div class="hvl" style="left:508px"></div>
<div class="vl" style="left:548px"></div>
<div class="hvl" style="left:548px"></div>
<div class="vl" style="left:585px"></div>
<div class="hvl" style="left:585px"></div>
<div class="vl" style="left:632px"></div>
<div class="hvl" style="left:632px"></div>
<div class="vl" style="left:720px"></div>
<div class="hvl" style="left:720px"></div>
<div class="vl" style="left:808px"></div>
<div class="hvl" style="left:808px"></div>
<div class="vl" style="left:896px"></div>
<div class="hvl" style="left:896px"></div>
<div class="vl" style="left:970px"></div>
<div class="hvl" style="left:970px"></div>
<div class="vl" style="left:1032px"></div>
<div class="hvl" style="left:1032px"></div>
<div class="vl" style="left:1081px"></div>
<div class="hvl" style="left:1081px"></div>
<div class="vl" style="left:1116px"></div>
<div class="hvl" style="left:1116px"></div>
<div class="vl" style="left:1160px"></div>
<div class="hvl" style="left:1160px"></div>
<div class="vl" style="left:1204px"></div>
<div class="hvl" style="left:1204px"></div>
<div class="vl" style="left:1248px"></div>
<div class="hvl" style="left:1248px"></div>
<div class="vl" style="left:1292px"></div>
<div class="hvl" style="left:1292px"></div>
<div id="botbar"></div>
</body></html>
